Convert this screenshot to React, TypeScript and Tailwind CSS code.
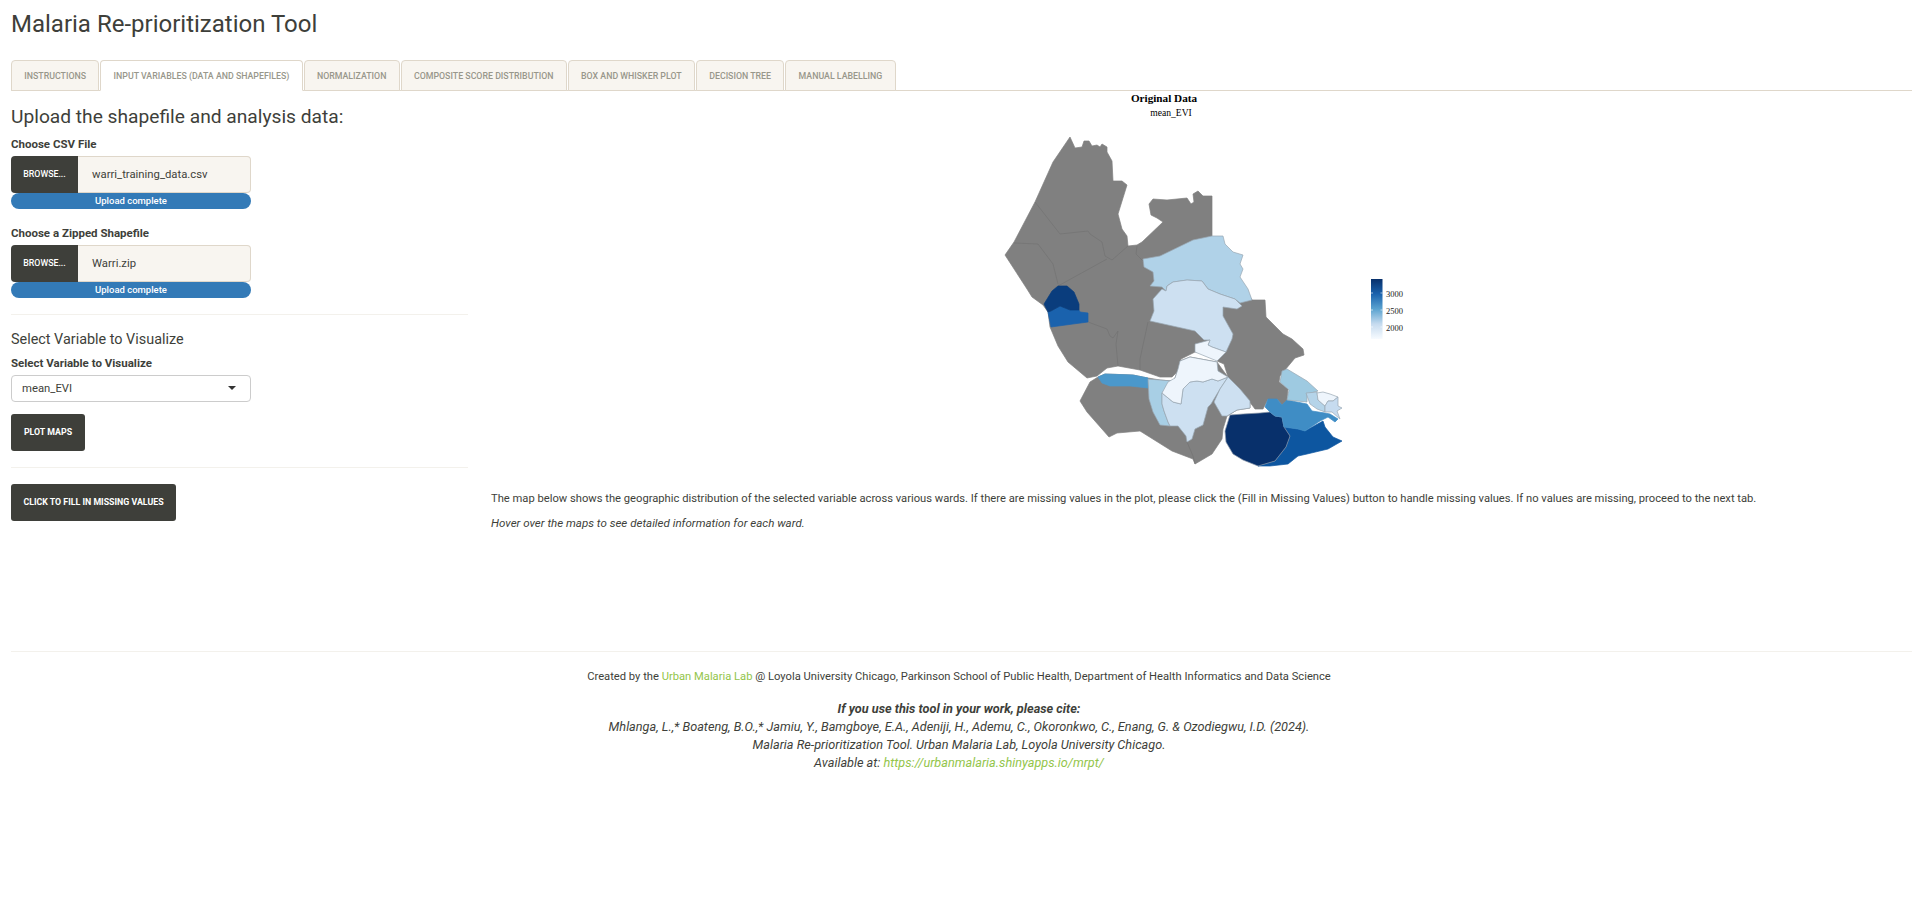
import React from "react";

const tabs = [
  "Instructions",
  "Input Variables (Data and Shapefiles)",
  "Normalization",
  "Composite Score Distribution",
  "Box and Whisker Plot",
  "Decision Tree",
  "Manual Labelling",
];

function FileInput({ label, file }: { label: string; file: string }) {
  return (
    <div>
      <div className="text-[11.5px] font-bold leading-[16px]">{label}</div>
      <div className="mt-[4px] flex h-[37px] w-[240px]">
        <div className="flex w-[67px] items-center justify-center rounded-l-[4px] bg-[#3e3f3a] pt-[1px] text-[8.8px] font-medium text-white">
          BROWSE...
        </div>
        <div className="flex flex-1 items-center rounded-r-[4px] border border-l-0 border-[#dfd7ca] bg-[#f8f5f0] pt-[1px] pl-[14px] text-[11.3px]">
          {file}
        </div>
      </div>
      <div className="flex h-[16px] w-[240px] items-center justify-center rounded-full bg-[#337ab7] pt-[1px] text-[9.5px] font-medium text-white">
        Upload complete
      </div>
    </div>
  );
}

const P = ({ d, fill, stroke = "#9aa7b3" }: { d: string; fill: string; stroke?: string }) => (
  <polygon points={d} fill={fill} stroke={stroke} strokeWidth={0.7} strokeLinejoin="round" />
);

function WardMap() {
  return (
    <svg viewBox="491 92 1421 396" className="block h-[396px] w-[1421px]">
      <defs>
        <linearGradient id="evi" x1="0" y1="0" x2="0" y2="1">
          <stop offset="0" stopColor="#08306b" />
          <stop offset="0.25" stopColor="#1a62ad" />
          <stop offset="0.5" stopColor="#5ba3d0" />
          <stop offset="0.75" stopColor="#c6dbef" />
          <stop offset="1" stopColor="#f7fbff" />
        </linearGradient>
      </defs>
      <text x="1164" y="103" textAnchor="middle" fontFamily="'Liberation Serif', serif" fontWeight="700" fontSize="11.2" fill="#000">Original Data</text>
      <text x="1171" y="116.5" textAnchor="middle" fontFamily="'Liberation Serif', serif" fontSize="9.6" fill="#000">mean_EVI</text>

      {/* north of the river */}
      <P
        fill="#808080"
        stroke="#808080"
        d="1070,138 1075,149 1082,148 1084,142 1089,142 1092,147 1097,146 1100,148 1102,145 1107,148 1107,153 1112,162 1113,182 1122,182 1127,186 1118,215 1122,230 1127,237 1128,247 1137,246 1142,243 1163,223 1157,219 1151,216 1149,205 1153,200 1167,201 1187,199 1191,205 1194,203 1193,195 1198,192 1203,197 1212,197 1212,237 1252,301 1265,301 1266,318 1283,335 1292,340 1303,350 1304,356 1295,359 1280,377 1279,383 1288,390 1287,401 1282,406 1277,400 1268,400 1263,410 1255,410 1240,390 1228,378 1224,365 1217,362 1226,353 1195,353 1181,360 1178,372 1172,378 1160,378 1140,371 1118,367 1107,369 1097,377 1087,379 1068,363 1058,347 1050,328 1048,313 1043,306 1032,298 1027,290 1005,256 1014,243 1035,203 1053,163"
      />
      {/* south of the river */}
      <P
        fill="#808080"
        stroke="#808080"
        d="1098,378 1105,375 1133,376 1148,379 1160,381 1172,382 1175,379 1178,370 1180,362 1190,358 1217,363 1222,370 1228,378 1240,390 1250,402 1250,409 1237,411 1227,417 1223,430 1222,440 1212,455 1195,465 1193,460 1172,452 1140,432 1117,434 1109,438 1087,413 1080,402 1090,383"
      />
      {/* internal ward borders */}
      <g fill="none" stroke="#707070" strokeWidth={0.6}>
        <polyline points="1035,203 1060,235 1088,232 1090,235 1102,243 1105,257 1112,261 1128,247" />
        <polyline points="1014,244 1038,245 1053,265 1058,285" />
        <polyline points="1058,287 1107,260" />
        <polyline points="1137,247 1136,255 1143,262" />
        <polyline points="1088,323 1107,330 1110,337 1113,339 1118,332 1116,345 1118,367" />
        <polyline points="1148,323 1140,360 1140,371" />
        <polyline points="1187,443 1193,457 1195,465" />
      </g>

      <P fill="#b0d2e8" d="1143,260 1160,257 1193,241 1212,237 1223,237 1225,245 1233,253 1243,256 1240,265 1243,270 1240,278 1248,290 1252,301 1240,304 1235,300 1220,295 1208,290 1202,282 1187,281 1173,283 1167,287 1166,292 1162,288 1150,287 1154,282 1153,273 1144,268" />
      <P fill="#cde0f1" d="1166,292 1167,287 1173,283 1187,281 1202,282 1208,290 1220,295 1235,300 1242,307 1237,310 1223,308 1223,317 1233,335 1232,340 1226,353 1212,348 1208,346 1210,341 1204,341 1195,332 1150,322 1154,312 1153,300 1162,290" />
      <P fill="#eef5fc" d="1195,345 1210,341 1208,346 1212,348 1226,353 1217,362 1195,353" />
      <P fill="#1a62ad" stroke="#1a62ad" d="1048,313 1051,312 1060,307 1070,311 1079,311 1080,313 1088,314 1088,323 1073,325 1051,328" />
      <P fill="#0a3d7d" stroke="#0a3d7d" d="1058,287 1067,287 1074,293 1079,305 1079,311 1070,311 1060,307 1051,312 1048,313 1044,305 1052,292" />

      <P fill="#4b98cb" stroke="#4b98cb" d="1098,378 1105,375 1133,376 1148,379 1148,389 1130,387 1110,387 1102,384" />
      <P fill="#a8cfe5" d="1148,380 1160,381 1172,382 1162,394 1162,405 1164,412 1168,423 1170,427 1160,426 1153,413 1149,400" />
      <P fill="#cde0f1" d="1162,394 1173,403 1181,405 1183,390 1190,383 1197,382 1203,383 1212,380 1218,382 1228,378 1220,390 1214,400 1211,405 1208,408 1203,426 1195,430 1192,440 1187,443 1186,437 1178,427 1170,427 1168,423 1164,412 1162,405" />
      <P fill="#eef5fc" d="1180,362 1190,358 1217,363 1218,372 1228,378 1218,382 1212,380 1203,383 1197,382 1190,383 1183,390 1181,405 1173,403 1162,394 1168,383 1175,379 1178,370" />
      <P fill="#cde0f1" d="1228,378 1240,390 1250,402 1250,409 1237,411 1227,417 1222,417 1214,403 1220,390" />

      <P fill="#0d56a0" stroke="#0d56a0" d="1290,437 1284,428 1298,430 1305,432 1323,422 1325,428 1333,438 1342,442 1328,450 1307,455 1298,457 1288,465 1270,467 1258,467 1275,462 1286,448" />
      <P fill="#08306b" stroke="#8a97a8" d="1230,416 1243,415 1260,414 1270,413 1275,417 1282,418 1284,428 1290,437 1286,448 1275,462 1258,467 1253,465 1243,461 1233,455 1226,443 1225,432" />
      <P fill="#3f8dc5" stroke="#3f8dc5" d="1265,408 1268,400 1277,400 1282,406 1287,401 1307,405 1312,412 1325,414 1330,415 1338,420 1335,423 1328,418 1320,422 1305,432 1298,430 1284,428 1282,418 1275,417 1270,413" />
      <P fill="#9ecae1" d="1280,383 1282,372 1287,370 1307,382 1318,392 1307,395 1307,403 1287,401 1289,391" />
      <P fill="#b5d4e9" d="1306,394 1317,393 1318,401 1325,407 1325,413 1317,410 1310,405" />
      <P fill="#eef5fc" d="1317,394 1323,393 1330,395 1338,398 1333,402 1328,402 1325,407 1318,401" />
      <P fill="#c6dbef" d="1325,407 1328,402 1333,402 1338,398 1338,407 1342,409 1337,412 1340,420 1332,413 1325,413" />

      {/* legend */}
      <rect x="1371" y="280" width="11.5" height="60" fill="url(#evi)" />
      <g stroke="#fff" strokeWidth={0.6}>
        <line x1="1371" x2="1373" y1="294" y2="294" />
        <line x1="1380.5" x2="1382.5" y1="294" y2="294" />
        <line x1="1371" x2="1373" y1="311" y2="311" />
        <line x1="1380.5" x2="1382.5" y1="311" y2="311" />
        <line x1="1371" x2="1373" y1="328" y2="328" />
        <line x1="1380.5" x2="1382.5" y1="328" y2="328" />
      </g>
      <g fontFamily="'Liberation Serif', serif" fontSize="8.5" fill="#222">
        <text x="1386" y="297.5">3000</text>
        <text x="1386" y="314.5">2500</text>
        <text x="1386" y="331.5">2000</text>
      </g>
    </svg>
  );
}

export default function App() {
  return (
    <div className="min-h-[905px] overflow-hidden bg-white pl-[11px] text-[#3e3f3a] [font-family:Roboto,sans-serif]">
      <h1 className="h-[60px] pt-[8px] text-[24px] leading-[32px] font-normal">Malaria Re-prioritization Tool</h1>

      <div className="flex h-[31px] gap-[1px] border-b border-[#dfd7ca]">
        {tabs.map((t, i) => (
          <div
            key={t}
            className={`h-[31px] rounded-t-[4px] border border-[#dfd7ca] px-[12.25px] pt-[8px] text-[8.8px] leading-[14px] font-medium whitespace-nowrap text-[#98978b] uppercase ${
              i === 1 ? "border-b-white bg-white" : "bg-[#f8f5f0]"
            }`}
          >
            {t}
          </div>
        ))}
      </div>

      <div className="flex">
        <div className="w-[457px] shrink-0">
          <h3 className="mt-[14px] text-[19.2px] leading-[24px] font-normal">Upload the shapefile and analysis data:</h3>
          <div className="mt-[7px]">
            <FileInput label="Choose CSV File" file="warri_training_data.csv" />
          </div>
          <div className="mt-[16px]">
            <FileInput label="Choose a Zipped Shapefile" file="Warri.zip" />
          </div>
          <hr className="mt-[16px] border-[#f3f1ec]" />
          <h4 className="mt-[15px] text-[14.4px] leading-[20px] font-normal">Select Variable to Visualize</h4>
          <div className="mt-[5px] text-[11.5px] leading-[16px] font-bold">Select Variable to Visualize</div>
          <div className="relative mt-[4px] flex h-[27px] w-[240px] items-center rounded-[4px] border border-[#cccccc] bg-white pt-[2px] pl-[10px] text-[11.3px]">
            mean_EVI
            <span className="absolute top-[10px] right-[14px] h-0 w-0 border-x-[4px] border-t-[4px] border-x-transparent border-t-[#333]" />
          </div>
          <div className="mt-[12px] flex h-[37px] w-[74px] items-center justify-center rounded-[3px] bg-[#3e3f3a] pt-[1px] text-[8.8px] font-bold text-white">
            PLOT MAPS
          </div>
          <hr className="mt-[16px] border-[#f3f1ec]" />
          <div className="mt-[16px] flex h-[37px] w-[165px] items-center justify-center rounded-[3px] bg-[#3e3f3a] pt-[1px] text-[8.8px] font-bold whitespace-nowrap text-white">
            CLICK TO FILL IN MISSING VALUES
          </div>
        </div>

        <div className="ml-[23px] min-w-0 flex-1">
          <WardMap />
          <p className="mt-[4px] text-[11.2px] leading-[16px] whitespace-nowrap">
            The map below shows the geographic distribution of the selected variable across various wards. If there are missing values in the plot, please click the (Fill in Missing Values) button to handle missing values. If no values are missing, proceed to the next tab.
          </p>
          <p className="mt-[8px] text-[11.55px] leading-[16px] italic">Hover over the maps to see detailed information for each ward.</p>
        </div>
      </div>

      <hr className="mt-[120px] border-[#f3f1ec]" />
      <div className="mt-[16px] pr-[5px] text-center text-[11.2px] leading-[18px]">
        <div>
          Created by the <span className="text-[#93c54b]">Urban Malaria Lab</span> @ Loyola University Chicago, Parkinson School of Public Health, Department of Health Informatics and Data Science
        </div>
        <div className="mt-[14px] text-[12.7px] italic">
          <div className="font-bold">If you use this tool in your work, please cite:</div>
          <div>Mhlanga, L.,* Boateng, B.O.,* Jamiu, Y., Bamgboye, E.A., Adeniji, H., Ademu, C., Okoronkwo, C., Enang, G. &amp; Ozodiegwu, I.D. (2024).</div>
          <div>Malaria Re-prioritization Tool. Urban Malaria Lab, Loyola University Chicago.</div>
          <div>
            Available at: <span className="text-[#93c54b]">https://urbanmalaria.shinyapps.io/mrpt/</span>
          </div>
        </div>
      </div>
    </div>
  );
}
